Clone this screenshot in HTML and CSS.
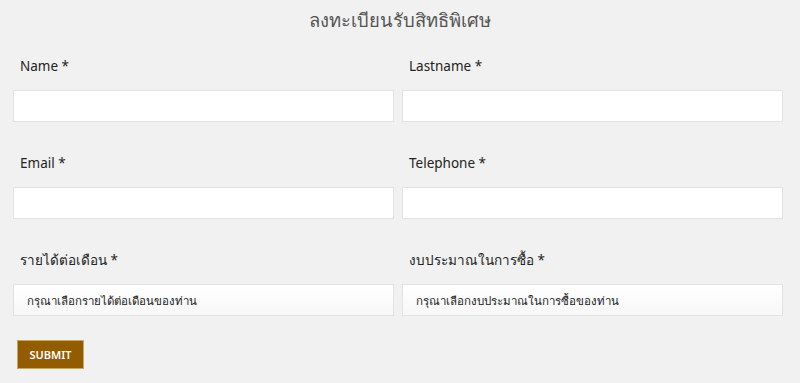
FILE: index.html
```html
<!DOCTYPE html>
<html lang="th">
<head>
<meta charset="utf-8">
<title>ลงทะเบียนรับสิทธิพิเศษ</title>
<link rel="stylesheet" href="styles.css">
</head>
<body>
<h1 class="title">ลงทะเบียนรับสิทธิพิเศษ</h1>
<form class="form">
  <div class="grid">
    <div class="field">
      <label class="label">Name *</label>
      <input class="input" type="text">
    </div>
    <div class="field">
      <label class="label">Lastname *</label>
      <input class="input" type="text">
    </div>
    <div class="field">
      <label class="label">Email *</label>
      <input class="input" type="text">
    </div>
    <div class="field">
      <label class="label">Telephone *</label>
      <input class="input" type="text">
    </div>
    <div class="field">
      <label class="label">รายได้ต่อเดือน *</label>
      <select class="select"><option>กรุณาเลือกรายได้ต่อเดือนของท่าน</option></select>
    </div>
    <div class="field">
      <label class="label">งบประมาณในการซื้อ *</label>
      <select class="select"><option>กรุณาเลือกงบประมาณในการซื้อของท่าน</option></select>
    </div>
  </div>
  <button class="submit" type="button">SUBMIT</button>
</form>
</body>
</html>
```
FILE: styles.css
```css
html, body {
  margin: 0;
  padding: 0;
  background: #f1f1f1;
  font-family: "Noto Sans", "Open Sans", "DejaVu Sans", sans-serif;
  color: #222;
}
.title {
  margin: 0;
  height: 40px;
  line-height: 40px;
  text-align: center;
  font-size: 18.4px;
  font-weight: normal;
  color: #555;
}
.form {
  padding: 16px 17px 0 13px;
}
.grid {
  display: grid;
  grid-template-columns: 1fr 1fr;
  column-gap: 8px;
  row-gap: 31px;
}
.field {
  display: flex;
  flex-direction: column;
}
.label {
  display: block;
  height: 20px;
  line-height: 20px;
  font-size: 13.5px;
  padding-left: 7px;
  margin-bottom: 14px;
}
.input, .select {
  box-sizing: border-box;
  height: 32px;
  width: 100%;
  margin: 0;
  border: 1px solid #e2e2e2;
  background: #fff;
  font-family: inherit;
  font-size: 11.5px;
  color: #222;
  outline: none;
}
.select {
  -webkit-appearance: none;
  appearance: none;
  padding: 0 13px;
  background: linear-gradient(#ffffff, #f7f7f7);
}
.submit {
  display: block;
  margin: 24px 0 0 4px;
  width: 67px;
  height: 29px;
  padding: 0;
  border: 1px solid #c9a56a;
  background: #935c00;
  color: #fff;
  font-family: inherit;
  font-size: 11px;
  font-weight: 600;
  cursor: pointer;
}
```
